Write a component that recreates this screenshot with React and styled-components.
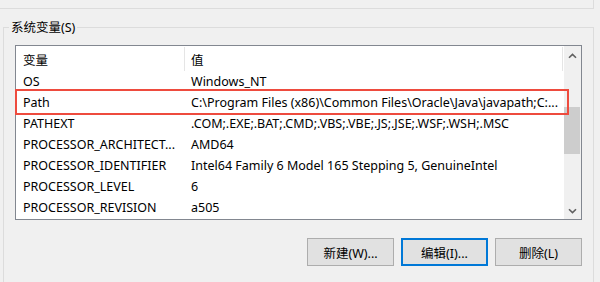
import React from 'react';
import styled, { createGlobalStyle } from 'styled-components';

const rows = [
  { name: 'OS', value: 'Windows_NT' },
  {
    name: 'Path',
    value: 'C:\\Program Files (x86)\\Common Files\\Oracle\\Java\\javapath;C:...',
    marked: true,
  },
  { name: 'PATHEXT', value: '.COM;.EXE;.BAT;.CMD;.VBS;.VBE;.JS;.JSE;.WSF;.WSH;.MSC' },
  { name: 'PROCESSOR_ARCHITECT...', value: 'AMD64' },
  { name: 'PROCESSOR_IDENTIFIER', value: 'Intel64 Family 6 Model 165 Stepping 5, GenuineIntel' },
  { name: 'PROCESSOR_LEVEL', value: '6' },
  { name: 'PROCESSOR_REVISION', value: 'a505' },
];

const Chevron = ({ down }) => (
  <svg width="9" height="6" viewBox="0 0 9 6">
    <path
      d={down ? 'M1 1.2 L4.5 4.6 L8 1.2' : 'M1 4.8 L4.5 1.4 L8 4.8'}
      fill="none"
      stroke="#606060"
      strokeWidth="1.6"
    />
  </svg>
);

const App = () => {
  return (
    <>
      <GlobalStyle />
      <Window>
        <UpperGroup />
        <GroupBox>
          <GroupTitle>系统变量(S)</GroupTitle>
          <ListBox>
            <Table>
              <HeaderRow>
                <NameCell $header>变量</NameCell>
                <ValueCell $header>值</ValueCell>
              </HeaderRow>
              {rows.map((row) => (
                <Row key={row.name} $marked={row.marked}>
                  <NameCell>{row.name}</NameCell>
                  <ValueCell>{row.value}</ValueCell>
                </Row>
              ))}
            </Table>
            <ScrollBar>
              <ArrowButton>
                <Chevron />
              </ArrowButton>
              <Track>
                <Thumb />
              </Track>
              <ArrowButton>
                <Chevron down />
              </ArrowButton>
            </ScrollBar>
          </ListBox>
          <ButtonRow>
            <Button>新建(W)...</Button>
            <Button $focused>编辑(I)...</Button>
            <Button>删除(L)</Button>
          </ButtonRow>
        </GroupBox>
      </Window>
    </>
  );
};

// ------------------------------Styled component ------------------------------------

const GlobalStyle = createGlobalStyle`
  html, body {
    margin: 0;
    padding: 0;
    background: #f0f0f0;
  }
  body {
    font-family: "Segoe UI", "Noto Sans", "Noto Sans CJK SC", sans-serif;
    font-size: 12.5px;
    color: #000;
  }
`;

const Window = styled.div`
  width: 600px;
  height: 282px;
  overflow: hidden;
  background: #f0f0f0;
`;

const UpperGroup = styled.div`
  height: 8px;
  margin-right: 6px;
  border-right: 1px solid #dcdcdc;
  border-bottom: 1px solid #dcdcdc;
`;

const GroupBox = styled.div`
  margin: 18px 6px 0 3px;
  height: 260px;
  border: 1px solid #dcdcdc;
  border-bottom: none;
`;

const GroupTitle = styled.div`
  width: fit-content;
  margin: -8px 0 0 5px;
  padding: 0 2px;
  line-height: 15px;
  background: #f0f0f0;
`;

const ListBox = styled.div`
  display: flex;
  width: 565px;
  height: 173px;
  margin: 10px 0 0 11px;
  border: 1px solid #828790;
  background: #fff;
`;

const Table = styled.div`
  flex: 1;
  min-width: 0;
`;

const HeaderRow = styled.div`
  display: flex;
  height: 25px;
  align-items: center;
`;

const Row = styled.div`
  position: relative;
  display: flex;
  height: 21px;
  align-items: center;

  ${({ $marked }) =>
    $marked &&
    `
    &::after {
      content: '';
      position: absolute;
      left: -1px;
      top: -3px;
      right: -5px;
      bottom: -2px;
      border: 2px solid #ee4b3e;
      pointer-events: none;
    }
  `}
`;

const NameCell = styled.div`
  width: 169px;
  flex-shrink: 0;
  box-sizing: border-box;
  padding-left: 7px;
  white-space: nowrap;
  overflow: hidden;
  align-self: stretch;
  display: flex;
  align-items: center;
  ${({ $header }) =>
    $header &&
    `
    border-right: 1px solid #e5e5e5;
    margin: 1px 0 0;
  `}
`;

const ValueCell = styled.div`
  flex: 1;
  min-width: 0;
  padding-left: 6px;
  white-space: nowrap;
  overflow: hidden;
  text-overflow: ellipsis;
  align-self: stretch;
  display: flex;
  align-items: center;
  ${({ $header }) =>
    $header &&
    `
    border-right: 1px solid #e5e5e5;
    margin: 1px 1px 0 0;
  `}
`;

const ScrollBar = styled.div`
  width: 17px;
  display: flex;
  flex-direction: column;
  background: #f0f0f0;
`;

const ArrowButton = styled.div`
  height: 17px;
  display: flex;
  align-items: center;
  justify-content: center;
  padding-top: 1px;
`;

const Track = styled.div`
  flex: 1;
  padding-top: 43px;
`;

const Thumb = styled.div`
  height: 47px;
  margin: 0 1px 0 0;
  background: #cdcdcd;
`;

const ButtonRow = styled.div`
  display: flex;
  justify-content: flex-end;
  gap: 7px;
  margin: 18px 11px 0 0;
`;

const Button = styled.button`
  width: 87px;
  height: 28px;
  box-sizing: border-box;
  padding: 0;
  font: inherit;
  color: #000;
  background: #e1e1e1;
  border: ${({ $focused }) => ($focused ? '2px solid #0078d7' : '1px solid #adadad')};
`;

export default App;
